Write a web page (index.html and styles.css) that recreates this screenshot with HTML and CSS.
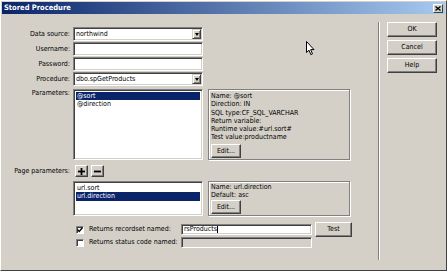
FILE: index.html
```html
<!DOCTYPE html>
<html lang="en">
<head>
    <meta charset="UTF-8">
    <title>Stored Procedure</title>
    <link rel="stylesheet" href="styles.css">
</head>
<body>
<div class="dialog">
    <div class="titlebar">
        <span class="title">Stored Procedure</span>
        <span class="close">
            <svg width="6" height="5" viewBox="0 0 6 5"><path d="M0.5 0.5 L5.5 4.5 M5.5 0.5 L0.5 4.5" stroke="#000" stroke-width="1.3"/></svg>
        </span>
    </div>

    <div class="content">
        <div class="form">
            <div class="row">
                <label class="lbl">Data source:</label>
                <div class="field select">northwind<span class="drop"><i></i></span></div>
            </div>
            <div class="row">
                <label class="lbl">Username:</label>
                <div class="field"></div>
            </div>
            <div class="row">
                <label class="lbl">Password:</label>
                <div class="field"></div>
            </div>
            <div class="row">
                <label class="lbl">Procedure:</label>
                <div class="field select">dbo.spGetProducts<span class="drop"><i></i></span></div>
            </div>

            <div class="row params">
                <label class="lbl">Parameters:</label>
                <div class="list big">
                    <div class="item selected">@sort</div>
                    <div class="item">@direction</div>
                </div>
                <div class="panel big">
                    <div>Name: @sort</div>
                    <div>Direction: IN</div>
                    <div>SQL type:CF_SQL_VARCHAR</div>
                    <div>Return variable:</div>
                    <div>Runtime value:#url.sort#</div>
                    <div>Test value:productname</div>
                    <button class="btn edit">Edit...</button>
                </div>
            </div>

            <div class="row pagerow">
                <label class="lbl">Page parameters:</label>
                <button class="btn tiny">
                    <svg width="7" height="7" viewBox="0 0 7 7"><rect x="0" y="2.6" width="7" height="1.8" fill="#000"/><rect x="2.6" y="0" width="1.8" height="7" fill="#000"/></svg>
                </button>
                <button class="btn tiny minus">
                    <svg width="7" height="7" viewBox="0 0 7 7"><rect x="0" y="2.6" width="7" height="1.8" fill="#000"/></svg>
                </button>
            </div>

            <div class="row params small-row">
                <span class="lbl"></span>
                <div class="list small">
                    <div class="item">url.sort</div>
                    <div class="item selected">url.direction</div>
                </div>
                <div class="panel small">
                    <div>Name: url.direction</div>
                    <div>Default: asc</div>
                    <button class="btn edit">Edit...</button>
                </div>
            </div>

            <div class="row check-row first">
                <span class="lbl"></span>
                <span class="check">
                    <svg width="6" height="6" viewBox="0 0 6 6"><path d="M0.6 2.6 L2.2 4.4 L5.4 0.8" stroke="#000" stroke-width="1.4" fill="none"/></svg>
                </span>
                <span class="check-text">Returns recordset named:</span>
                <div class="field text">rsProducts<span class="caret"></span></div>
                <button class="btn test">Test</button>
            </div>
            <div class="row check-row second">
                <span class="lbl"></span>
                <span class="check"></span>
                <span class="check-text">Returns status code named:</span>
                <div class="field text disabled"></div>
            </div>
        </div>

        <div class="sep"></div>

        <div class="buttons">
            <button class="btn main">OK</button>
            <button class="btn main">Cancel</button>
            <button class="btn main">Help</button>
        </div>
    </div>

    <svg class="cursor" width="9" height="15" viewBox="0 0 9 15">
        <path d="M0.5 0.5 L0.5 11.5 L3 9.2 L4.8 13.6 L6.5 12.9 L4.7 8.6 L8 8.6 Z" fill="#fff" stroke="#000" stroke-width="1"/>
    </svg>
</div>
</body>
</html>
```

FILE: styles.css
```css
body {
    margin: 0;
    background: #d4d0c8;
}

.dialog {
    position: relative;
    width: 447px;
    height: 271px;
    box-sizing: border-box;
    border: 1px solid;
    border-color: #fff #404040 #404040 #fff;
    background: #d4d0c8;
    font-family: "DejaVu Sans Condensed", "DejaVu Sans", sans-serif;
    font-size: 7px;
    line-height: 8.3px;
    color: #000;
    overflow: hidden;
}

.titlebar {
    display: flex;
    align-items: center;
    justify-content: space-between;
    height: 12px;
    margin: 1px 1px 0 1px;
    padding: 0 2px 0 2px;
    background: linear-gradient(to right, #0a246a, #a6caf0);
}

.title {
    color: #fff;
    font-weight: bold;
    font-size: 7.5px;
}

.close {
    display: flex;
    align-items: center;
    justify-content: center;
    width: 10px;
    height: 9px;
    box-sizing: border-box;
    background: #d4d0c8;
    border: 1px solid;
    border-color: #fff #404040 #404040 #fff;
}

.content {
    display: flex;
}

.form {
    width: 377px;
    padding-top: 13px;
}

.row {
    display: flex;
    align-items: center;
    height: 14px;
    margin-bottom: 1px;
}

.lbl {
    flex: none;
    width: 72px;
    padding-right: 3px;
    box-sizing: border-box;
    text-align: right;
}

.field {
    position: relative;
    width: 130px;
    height: 14px;
    box-sizing: border-box;
    padding-left: 2px;
    line-height: 12px;
    background: #fff;
    border: 1px solid;
    border-color: #808080 #fff #fff #808080;
    box-shadow: inset 1px 1px 0 #404040, inset -1px -1px 0 #d4d0c8;
}

.drop {
    position: absolute;
    top: 1px;
    right: 1px;
    bottom: 1px;
    width: 9px;
    box-sizing: border-box;
    display: flex;
    align-items: center;
    justify-content: center;
    background: #d4d0c8;
    border: 1px solid;
    border-color: #d4d0c8 #404040 #404040 #d4d0c8;
    box-shadow: inset 1px 1px 0 #fff, inset -1px -1px 0 #808080;
}

.drop i {
    width: 0;
    height: 0;
    border-left: 2.5px solid transparent;
    border-right: 2.5px solid transparent;
    border-top: 3px solid #000;
}

.params {
    align-items: flex-start;
    height: auto;
    margin-top: 3px;
    margin-bottom: 0;
}

.params .lbl {
    padding-top: 0;
}

.list {
    width: 130px;
    box-sizing: border-box;
    padding: 2px;
    background: #fff;
    border: 1px solid;
    border-color: #808080 #fff #fff #808080;
    box-shadow: inset 1px 1px 0 #404040, inset -1px -1px 0 #d4d0c8;
}

.list.big {
    height: 71px;
}

.list.small {
    height: 35px;
}

.item {
    padding-left: 1px;
    height: 8.3px;
}

.item.selected {
    background: #0a246a;
    color: #fff;
}

.panel {
    margin-left: 5px;
    width: 142px;
    box-sizing: border-box;
    padding: 2px 0 0 2px;
    border: 1px solid #808080;
    box-shadow: 1px 1px 0 #fff, inset 1px 1px 0 #fff;
}

.panel.big {
    height: 71px;
}

.panel.small {
    height: 35px;
    padding-top: 1px;
}

.btn {
    display: flex;
    align-items: center;
    justify-content: center;
    box-sizing: border-box;
    padding: 0;
    font: inherit;
    color: #000;
    background: #d4d0c8;
    border: 1px solid;
    border-color: #fff #404040 #404040 #fff;
    box-shadow: inset -1px -1px 0 #808080;
}

.edit {
    width: 30px;
    height: 14px;
    margin-top: 2px;
}

.panel.small .edit {
    margin-top: 0.5px;
}

.pagerow {
    height: 12px;
    margin-top: 5px;
    margin-bottom: 0;
}

.tiny {
    width: 13px;
    height: 12px;
    margin-left: 2px;
}

.tiny.minus {
    margin-left: 3px;
}

.small-row {
    margin-top: 4px;
}

.check-row {
    height: 15px;
    margin: 0;
}

.check-row.first {
    margin-top: 6px;
}

.check-row.second {
    height: 11px;
}

.check {
    flex: none;
    display: flex;
    align-items: center;
    justify-content: center;
    width: 8px;
    height: 8px;
    margin-left: 3px;
    box-sizing: border-box;
    background: #fff;
    border: 1px solid;
    border-color: #808080 #fff #fff #808080;
    box-shadow: inset 1px 1px 0 #404040;
}

.check-text {
    flex: none;
    width: 92px;
    margin-left: 5px;
}

.field.text {
    width: 131px;
    height: 11px;
    line-height: 9px;
}

.field.disabled {
    background: #d4d0c8;
}

.caret {
    display: inline-block;
    width: 1px;
    height: 7px;
    background: #000;
    vertical-align: middle;
}

.test {
    width: 37px;
    height: 15px;
    margin-left: 3px;
}

.sep {
    width: 0;
    height: 238px;
    margin-top: 8px;
    border-left: 1px solid #808080;
    border-right: 1px solid #fff;
}

.buttons {
    display: flex;
    flex-direction: column;
    gap: 3px;
    margin-left: 7px;
    padding-top: 8px;
}

.main {
    width: 50px;
    height: 15px;
}

.cursor {
    position: absolute;
    left: 305px;
    top: 40px;
}
```
